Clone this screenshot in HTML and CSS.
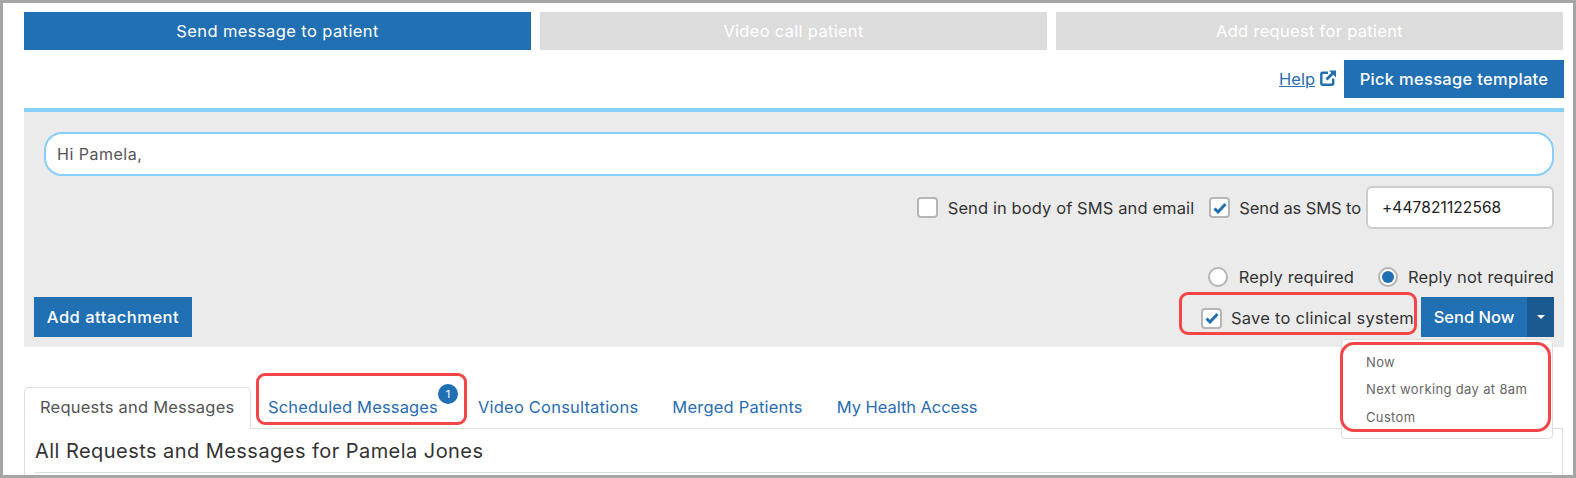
FILE: index.html
```html
<!DOCTYPE html>
<html lang="en">
<head>
<meta charset="utf-8">
<title>Send message to patient</title>
<link rel="stylesheet" href="styles.css">
</head>
<body>
<div class="frame">
  <div class="actions">
    <div class="action action-on">Send message to patient</div>
    <div class="action action-off">Video call patient</div>
    <div class="action action-off">Add request for patient</div>
  </div>
  <div class="help-row">
    <a class="help-link">Help</a>
    <svg class="ext-icon" viewBox="0 0 16 16" aria-hidden="true"><path d="M8 2.800H2.500a1.200 1.200 0 0 0-1.200 1.200v9.500a1.200 1.200 0 0 0 1.200 1.200H12a1.200 1.200 0 0 0 1.200-1.200V8.500" fill="none" stroke="#2170b4" stroke-width="2.400"/><path d="M6.500 9.500 13.500 2.500" fill="none" stroke="#2170b4" stroke-width="2.800"/><path d="M9 0.500H16V7.500Z" fill="#2170b4"/></svg>
    <div class="btn template-btn">Pick message template</div>
  </div>
  <div class="composer">
    <div class="message-box">Hi Pamela,</div>
    <div class="send-options">
      <span class="check"></span><span class="opt-label body-label">Send in body of SMS and email</span>
      <span class="check check-second"><svg class="tick" viewBox="0 0 14 12" aria-hidden="true"><path d="M1.500 6.500 5 10 12.500 2" fill="none" stroke="#2170b4" stroke-width="3"/></svg></span><span class="opt-label sms-label">Send as SMS to</span>
      <div class="phone">+447821122568</div>
    </div>
    <div class="reply-row">
      <span class="radio"></span><span class="opt-label reply-a">Reply required</span>
      <span class="radio radio-on"><span class="radio-dot"></span></span><span class="opt-label reply-b">Reply not required</span>
    </div>
    <div class="bottom-row">
      <div class="btn attach-btn">Add attachment</div>
      <div class="send-group">
        <span class="check check-save"><svg class="tick" viewBox="0 0 14 12" aria-hidden="true"><path d="M1.500 6.500 5 10 12.500 2" fill="none" stroke="#2170b4" stroke-width="3"/></svg></span><span class="opt-label save-label">Save to clinical system</span>
        <div class="send-btn"><span class="send-text">Send Now</span><span class="send-caret"><span class="caret"></span></span></div>
      </div>
    </div>
    <div class="mark mark-save"></div>
    <div class="menu">
      <div class="menu-item">Now</div>
      <div class="menu-item">Next working day at 8am</div>
      <div class="menu-item">Custom</div>
    </div>
    <div class="mark mark-menu"></div>
  </div>
  <div class="tabs">
    <div class="tab tab-on">Requests and Messages</div>
    <div class="tab tab-sched">Scheduled Messages<span class="badge">1</span><span class="mark mark-tab"></span></div>
    <div class="tab tab-video">Video Consultations</div>
    <div class="tab tab-merged">Merged Patients</div>
    <div class="tab tab-access">My Health Access</div>
  </div>
  <div class="tab-body">
    <h2 class="title">All Requests and Messages for Pamela Jones</h2>
  </div>
</div>
</body>
</html>
```
FILE: styles.css
```css
* { box-sizing: border-box; }
html, body { margin: 0; padding: 0; background: #fff; }
body { font-family: Inter, "Noto Sans", "Liberation Sans", sans-serif; color: #333; }
.frame {
  width: 1576px; height: 478px; overflow: hidden;
  border: 3px solid #a5a5a5;
  padding: 9px 9px 0 21px;
}
.actions { display: flex; gap: 9px; margin-right: 1px; }
.action {
  flex: 1; height: 38px; display: flex; align-items: center; justify-content: center;
  color: #fff; font-size: 16.5px; letter-spacing: .4px;
}
.action-on { background: #2170b4; }
.action-off { background: #dcdcdc; letter-spacing: .3px; }
.help-row { display: flex; justify-content: flex-end; align-items: center; margin-top: 10px; height: 38px; }
.help-link { color: #2a6db0; text-decoration: underline; font-size: 16.5px; }
.ext-icon { width: 16px; height: 16px; margin: -3px 8px 0 5px; }
.btn { display: flex; align-items: center; justify-content: center; background: #2170b4; color: #fff; font-weight: 500; }
.template-btn { width: 220px; height: 38px; font-size: 16.5px; letter-spacing: .3px; }
.composer {
  position: relative; margin-top: 10px; height: 239px;
  border-top: 4px solid #87cefa; background: #ebebeb;
  padding: 20px 10px 0;
}
.message-box {
  margin-left: 10px; height: 44px; background: #fff;
  border: 2px solid #87cefa; border-radius: 18px;
  padding: 0 11px; display: flex; align-items: center;
  font-size: 16px; color: #555; letter-spacing: .5px;
}
.send-options { display: flex; align-items: center; justify-content: flex-end; height: 43px; margin-top: 10px; }
.check {
  width: 21px; height: 21px; background: #fff; border: 2px solid #b5b5b5; border-radius: 4px;
  display: inline-flex; align-items: center; justify-content: center; flex: none;
}
.tick { width: 14px; height: 12px; }
.opt-label { font-size: 16.5px; color: #333; white-space: nowrap; }
.body-label { margin-left: 10px; letter-spacing: .1px; }
.check-second { margin-left: 15px; }
.sms-label { margin-left: 9px; letter-spacing: -.1px; }
.phone {
  width: 188px; height: 43px; margin-left: 5px; background: #fff;
  border: 2px solid #ccc; border-radius: 6px;
  display: flex; align-items: center; padding-left: 14px;
  font-size: 15.5px; letter-spacing: .1px; color: #222;
}
.reply-row { display: flex; align-items: center; justify-content: flex-end; height: 20px; margin-top: 38px; }
.radio {
  width: 20px; height: 20px; border-radius: 50%; background: #fff; border: 2px solid #b5b5b5;
  display: inline-flex; align-items: center; justify-content: center; flex: none;
}
.radio-dot { width: 12px; height: 12px; border-radius: 50%; background: #2170b4; }
.reply-a { margin-left: 11px; letter-spacing: .15px; }
.radio-on { margin-left: 24px; }
.reply-b { margin-left: 10px; letter-spacing: .18px; }
.bottom-row { display: flex; justify-content: space-between; margin-top: 10px; }
.attach-btn { width: 158px; height: 40px; font-size: 16.5px; letter-spacing: .5px; }
.send-group { display: flex; align-items: center; }
.check-save { margin-top: 2px; }
.save-label { margin-left: 9px; margin-top: 2px; letter-spacing: .25px; }
.send-btn { display: flex; height: 40px; width: 133px; margin-left: 7px; background: #2170b4; color: #fff; }
.send-text { flex: 1; display: flex; align-items: center; justify-content: center; font-size: 16.5px; font-weight: 500; }
.send-caret { width: 27px; background: #1a5a91; display: flex; align-items: center; justify-content: center; }
.caret { width: 0; height: 0; border-left: 4px solid transparent; border-right: 4px solid transparent; border-top: 4px solid #fff; }
.mark { position: absolute; border: 3px solid #f44548; border-radius: 9px; pointer-events: none; }
.mark-save { left: 1155px; top: 180px; width: 238px; height: 43px; }
.menu {
  position: absolute; z-index: 2; left: 1317px; top: 227px; width: 212px; height: 100px;
  background: #fff; border: 1px solid #ddd; border-radius: 4px; padding-top: 8px;
}
.menu-item { height: 27.500px; padding-left: 24px; font-size: 13px; color: #666; letter-spacing: .35px; display: flex; align-items: center; }
.mark-menu { z-index: 3; left: 1316px; top: 230px; width: 211px; height: 90px; border-radius: 14px; }
.tabs { display: flex; margin-top: 37px; height: 45px; align-items: flex-end; border-bottom: 1px solid #ddd; margin-right: 1px; }
.tab { position: relative; height: 41px; padding-bottom: 2px; display: flex; align-items: center; font-size: 16.5px; color: #2a6db0; letter-spacing: .2px; white-space: nowrap; }
.tab-on {
  width: 227px; margin-bottom: -1px; height: 42px; padding: 0 0 3px 15px; background: #fff; color: #555;
  border: 1px solid #ddd; border-bottom: 0; border-radius: 5px 5px 0 0;
}
.tab-sched { margin-left: 17px; width: 171px; letter-spacing: .15px; }
.tab-video { margin-left: 39px; }
.tab-merged { margin-left: 34px; }
.tab-access { margin-left: 34px; letter-spacing: -.05px; }
.badge {
  position: absolute; left: 170px; top: -3px; width: 20px; height: 20px; border-radius: 50%;
  background: #2170b4; color: #fff; font-size: 11px; letter-spacing: 0;
  display: flex; align-items: center; justify-content: center;
}
.mark-tab { left: -12px; top: -14px; width: 211px; height: 52px; }
.tab-body { border-left: 1px solid #ddd; border-right: 1px solid #ddd; padding: 0 10px; margin-right: 1px; height: 60px; }
.title {
  margin: 0; height: 44px; border-bottom: 1px solid #ddd;
  display: flex; align-items: center; font-size: 20px; font-weight: 400; color: #333; letter-spacing: .45px;
}
```
